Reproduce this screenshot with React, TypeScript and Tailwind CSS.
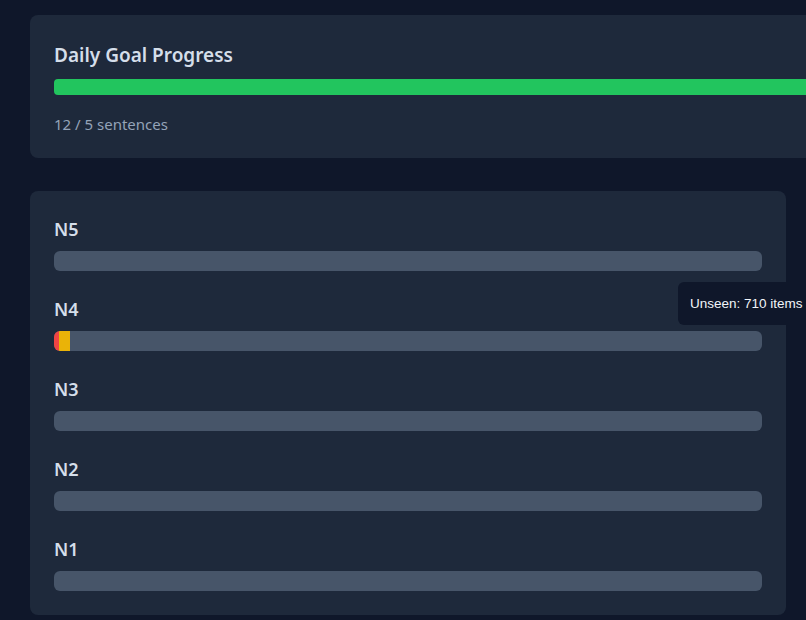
import React from "react"

type Level = {
  name: string
  segments: { color: string; width: number }[]
}

const levels: Level[] = [
  { name: "N5", segments: [] },
  {
    name: "N4",
    segments: [
      { color: "bg-[#ef4444]", width: 5 },
      { color: "bg-[#eab308]", width: 11 },
    ],
  },
  { name: "N3", segments: [] },
  { name: "N2", segments: [] },
  { name: "N1", segments: [] },
]

function LevelRow({ level }: { level: Level }) {
  return (
    <div className="flex flex-col">
      <h3 className="text-lg font-semibold leading-7 text-[#d5deea]">{level.name}</h3>
      <div className="mt-2 flex h-5 w-full overflow-hidden rounded-md bg-[#475569]">
        {level.segments.map((s, i) => (
          <div key={i} className={`h-full ${s.color}`} style={{ width: s.width }} />
        ))}
      </div>
    </div>
  )
}

export default function App() {
  return (
    <div
      className="relative h-[620px] w-[806px] overflow-hidden bg-[#0f172a] pl-[30px] pt-[15px]"
      style={{ fontFamily: '"Noto Sans", "Open Sans", sans-serif' }}
    >
      {/* daily goal */}
      <div className="w-[820px] rounded-lg bg-[#1e293b] p-6">
        <h2 className="text-[19px] font-semibold leading-8 text-[#d5deea]">Daily Goal Progress</h2>
        <div className="mt-2 h-4 w-full rounded bg-[#22c55e]" />
        <p className="mt-[19px] text-[15px] leading-5 text-[#94a3b8]">12 / 5 sentences</p>
      </div>

      {/* levels */}
      <div className="mt-[33px] flex w-[756px] flex-col gap-6 rounded-lg bg-[#1e293b] p-6">
        {levels.map((l) => (
          <LevelRow key={l.name} level={l} />
        ))}
      </div>

      <div
        className="absolute left-[678px] top-[282px] whitespace-nowrap rounded-md bg-[#0f172a] px-3 py-3 text-[13.5px] font-medium leading-[19px] text-[#f1f5f9]"
        style={{ fontFamily: '"Liberation Sans", Arial, sans-serif' }}
      >
        Unseen: 710 items
      </div>
    </div>
  )
}
